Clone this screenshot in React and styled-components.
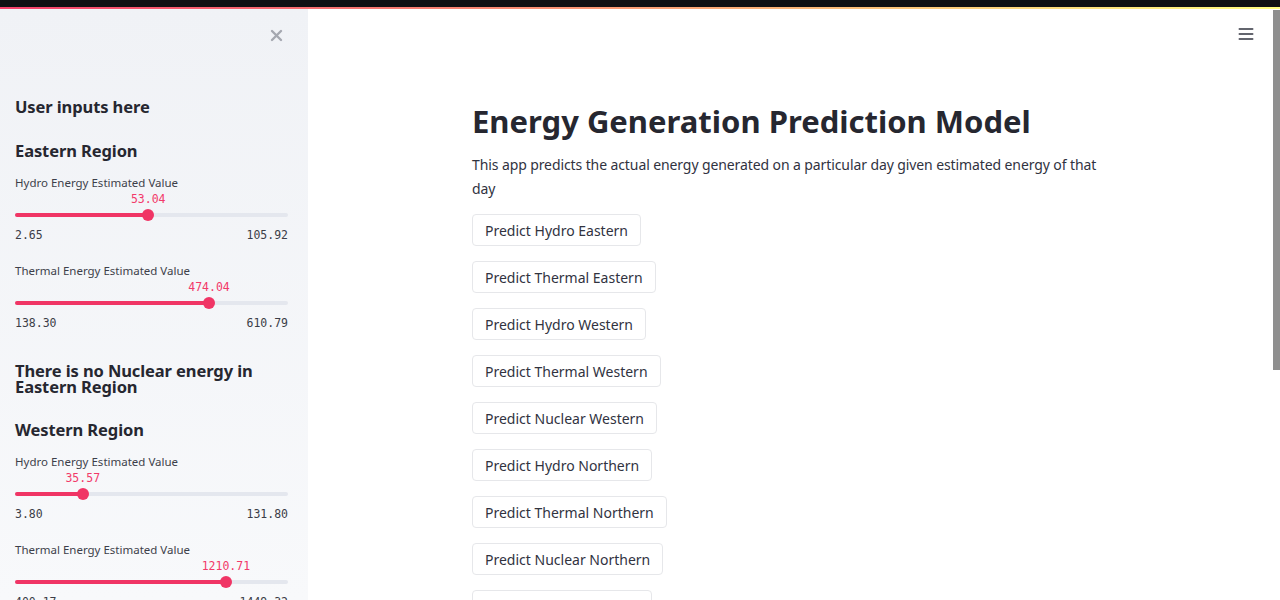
import styled, { createGlobalStyle } from "styled-components";

const GlobalStyle = createGlobalStyle`
  html, body { margin: 0; padding: 0; height: 100%; }
  body {
    font-family: "Noto Sans", "Liberation Sans", sans-serif;
    color: #262730;
    background: #ffffff;
    overflow: hidden;
  }
  #root { height: 100%; }
  * { box-sizing: border-box; }
`

const sliders = {
  eastern: [
    { label: "Hydro Energy Estimated Value", min: "2.65", max: "105.92", value: 53.04 },
    { label: "Thermal Energy Estimated Value", min: "138.30", max: "610.79", value: 474.04 },
  ],
  western: [
    { label: "Hydro Energy Estimated Value", min: "3.80", max: "131.80", value: 35.57 },
    { label: "Thermal Energy Estimated Value", min: "400.17", max: "1449.32", value: 1210.71 },
  ],
}

const buttons = [
  "Predict Hydro Eastern",
  "Predict Thermal Eastern",
  "Predict Hydro Western",
  "Predict Thermal Western",
  "Predict Nuclear Western",
  "Predict Hydro Northern",
  "Predict Thermal Northern",
  "Predict Nuclear Northern",
  "Predict Hydro Southern",
  "Predict Thermal Southern",
  "Predict Nuclear Southern",
  "Predict Hydro NorthEastern",
  "Predict Thermal NorthEastern",
]

const Slider = ({ label, min, max, value }) => {
  const pct = ((value - parseFloat(min)) / (parseFloat(max) - parseFloat(min))) * 100
  return (
    <SliderBlock>
      <SliderLabel>{label}</SliderLabel>
      <ValueRow>
        <ValueTag style={{ left: `${pct}%` }}>{value.toFixed(2)}</ValueTag>
      </ValueRow>
      <Track>
        <Rail>
          <Fill style={{ width: `${pct}%` }} />
        </Rail>
        <Thumb style={{ left: `${pct}%` }} />
      </Track>
      <Ticks>
        <span>{min}</span>
        <span>{max}</span>
      </Ticks>
    </SliderBlock>
  )
}

const App = () => {
  return (
    <>
      <GlobalStyle />
      <Page>
        <TopStrip />
        <Decoration />
        <Body>
          <Sidebar>
            <CloseRow>
              <svg width="13" height="13" viewBox="0 0 13 13">
                <path d="M2 2 L11 11 M11 2 L2 11" stroke="#a5a8b0" strokeWidth="2.4" strokeLinecap="round" />
              </svg>
            </CloseRow>
            <SideHeading>User inputs here</SideHeading>
            <SideHeading top={21}>Eastern Region</SideHeading>
            {sliders.eastern.map((s, i) => <Slider key={i} {...s} />)}
            <SideHeading top={32} tight>There is no Nuclear energy in Eastern Region</SideHeading>
            <SideHeading top={23}>Western Region</SideHeading>
            {sliders.western.map((s, i) => <Slider key={i} {...s} />)}
          </Sidebar>
          <Main>
            <Header>
              <svg width="20" height="20" viewBox="0 0 24 24" fill="none">
                <path d="M4 6h16M4 12h16M4 18h16" stroke="#31333f" strokeWidth="2" strokeLinecap="round" />
              </svg>
            </Header>
            <Block>
              <Title>Energy Generation Prediction Model</Title>
              <Intro>This app predicts the actual energy generated on a particular day given estimated energy of that day</Intro>
              {buttons.map((b) => (
                <ButtonRow key={b}>
                  <Button>{b}</Button>
                </ButtonRow>
              ))}
            </Block>
          </Main>
          <ScrollRail>
            <ScrollThumb />
          </ScrollRail>
        </Body>
      </Page>
    </>
  )
}

export default App;

const Page = styled.div`
  height: 100vh;
  display: flex;
  flex-direction: column;
`

const TopStrip = styled.div`
  height: 7px;
  background: #0f1013;
  flex-shrink: 0;
`

const Decoration = styled.div`
  height: 2px;
  flex-shrink: 0;
  background: linear-gradient(90deg, #f5416c, #fffd80);
`

const Body = styled.div`
  flex: 1;
  display: flex;
  min-height: 0;
`

const Sidebar = styled.aside`
  width: 308px;
  flex-shrink: 0;
  overflow: hidden;
  padding: 0 20px 0 15px;
  background: linear-gradient(180deg, #f0f2f6 0%, #f8f9fb 100%);
`

const CloseRow = styled.div`
  display: flex;
  justify-content: flex-end;
  padding: 20px 5px 0 0;
  height: 33px;
`

const SideHeading = styled.h3`
  margin: ${(props) => props.top || 53}px 0 0;
  font-size: 16.5px;
  font-weight: 700;
  line-height: ${(props) => (props.tight ? "16px" : "23px")};
  color: #262730;
  letter-spacing: -0.1px;
`

const SliderBlock = styled.div`
  margin-top: 13px;
  & + & {
    margin-top: 20px;
  }
`

const SliderLabel = styled.div`
  font-size: 11.5px;
  line-height: 16px;
  color: #3d3f4a;
`

const ValueRow = styled.div`
  position: relative;
  height: 16px;
`

const ValueTag = styled.span`
  position: absolute;
  top: 0;
  transform: translateX(-50%);
  font-family: "DejaVu Sans Mono", "Liberation Mono", monospace;
  font-size: 11.5px;
  line-height: 16px;
  color: #f23a6a;
  white-space: nowrap;
`

const Track = styled.div`
  position: relative;
  height: 16px;
  display: flex;
  align-items: center;
`

const Rail = styled.div`
  width: 100%;
  height: 4px;
  border-radius: 2px;
  background: #e4e7ee;
  overflow: hidden;
`

const Fill = styled.div`
  height: 100%;
  background: #f03565;
`

const Thumb = styled.div`
  position: absolute;
  top: 2px;
  width: 12px;
  height: 12px;
  margin-left: -6px;
  border-radius: 50%;
  background: #f03565;
`

const Ticks = styled.div`
  display: flex;
  justify-content: space-between;
  margin-top: 4px;
  font-family: "DejaVu Sans Mono", "Liberation Mono", monospace;
  font-size: 11.5px;
  line-height: 16px;
  color: #3b3d47;
`

const Main = styled.main`
  flex: 1;
  overflow: hidden;
  background: #ffffff;
`

const ScrollRail = styled.div`
  width: 7px;
  flex-shrink: 0;
  background: #ffffff;
  padding-top: 1px;
`

const ScrollThumb = styled.div`
  height: 360px;
  background: #8f8f8f;
`

const Header = styled.header`
  height: 50px;
  display: flex;
  align-items: center;
  justify-content: flex-end;
  padding-right: 17px;
`

const Block = styled.div`
  width: 669px;
  margin: 0 auto;
  padding: 41px 16px 154px;
`

const Title = styled.h1`
  margin: 0;
  font-size: 31px;
  font-weight: 700;
  line-height: 43px;
  color: #262730;
`

const Intro = styled.p`
  margin: 10px 0 13px;
  font-size: 14px;
  letter-spacing: -0.1px;
  line-height: 24px;
  color: #31333f;
`

const ButtonRow = styled.div`
  margin-bottom: 15px;
`

const Button = styled.button`
  height: 32px;
  padding: 0 12px;
  border: 1px solid #e6e7ea;
  border-radius: 4px;
  background: #ffffff;
  font-family: "Noto Sans", "Liberation Sans", sans-serif;
  font-size: 14px;
  color: #31333f;
  cursor: pointer;
`
